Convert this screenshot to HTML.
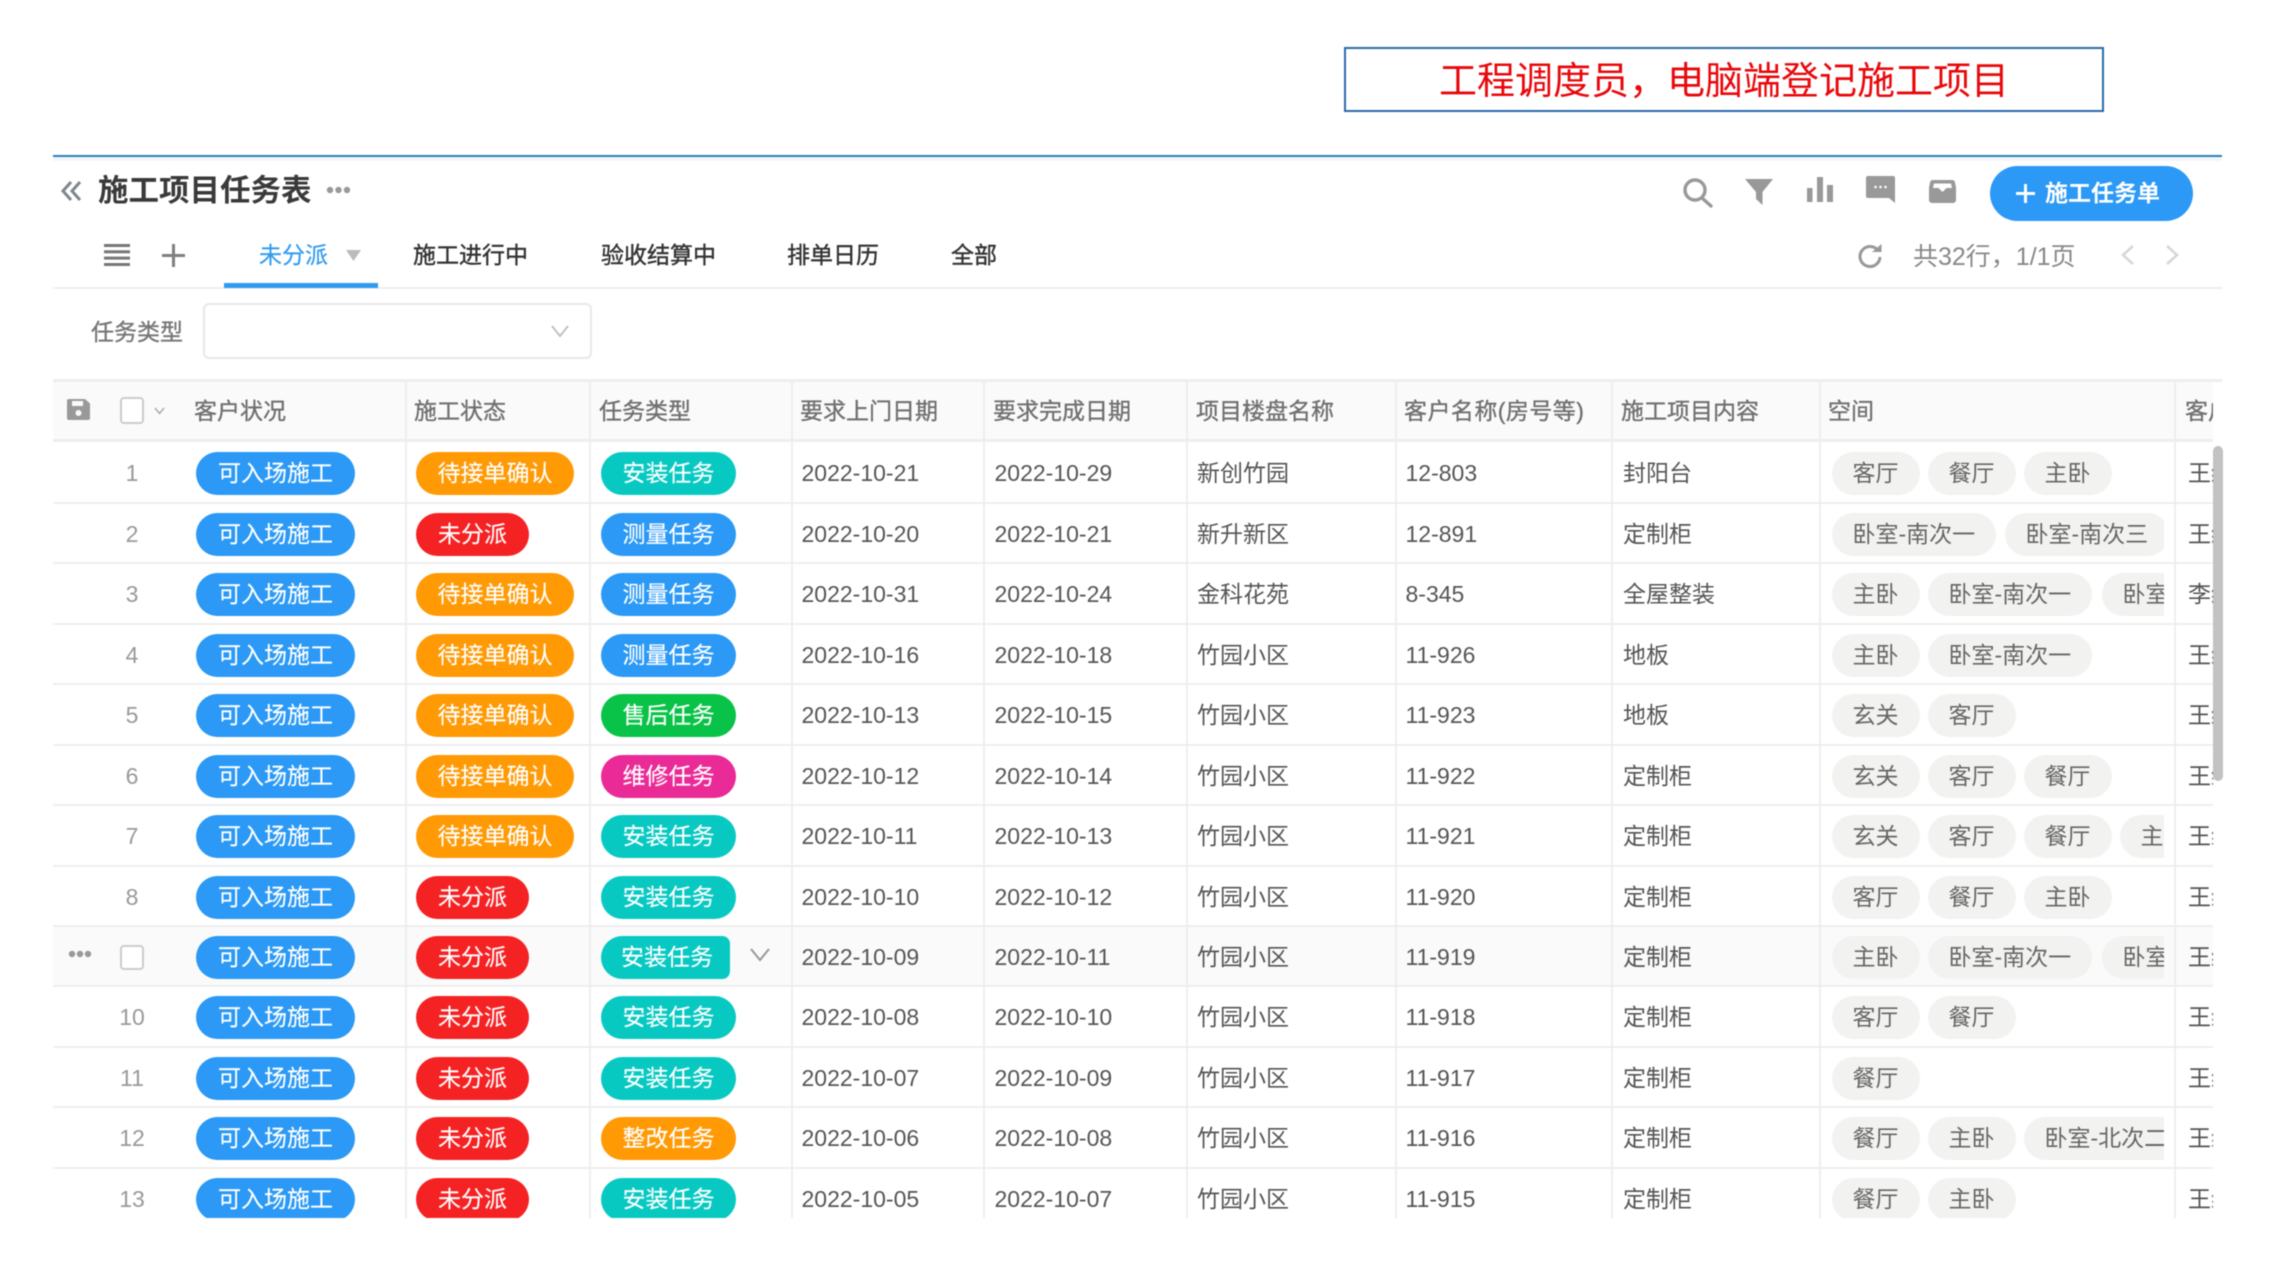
<!DOCTYPE html>
<html lang="zh"><head><meta charset="utf-8"><title>施工项目任务表</title>
<style>
html,body{margin:0;padding:0;background:#fff}
#p{position:relative;width:2276px;height:1280px;overflow:hidden;background:#fff;font-family:"Liberation Sans","Noto Sans CJK SC",sans-serif;font-size:23px;color:#555;filter:blur(.55px)}
#p div,#p span,#p svg{position:absolute;white-space:nowrap}
.x{line-height:60px}
.t{left:53px;top:379px;width:2160px;height:838.500px;overflow:hidden}
.v{top:0;bottom:0;width:2px;background:#eee}
.r{left:0;width:2160px;height:60.450px;box-sizing:border-box;border-bottom:2px solid #eee;margin-top:1.400px}
.h{left:0;top:0;width:2160px;height:63px;background:#fafafa;border-top:3px solid #eee;border-bottom:3px solid #eee;box-sizing:border-box}
.ht{top:2px;line-height:60px;color:#707070;-webkit-text-stroke:.35px #707070}
#p .r>span{top:0;line-height:60px}
#p .r>span.n{left:56px;width:46px;text-align:center;color:#999}
#p .r>span.p{top:9px;height:43px;line-height:42px;border-radius:22px;color:#fff;text-align:center;-webkit-text-stroke:.15px #fff}
.a{left:143px;width:159px;background:#2b99f5}
.so{left:363px;width:158px;background:#ff9a05}
.sr{left:363px;width:113px;background:#f52224}
.ty{left:548px;width:135px}
.te{background:#08c9c2}.bl{background:#2b99f5}.gr{background:#08c347}.pk{background:#ea2a96}.or{background:#ff9a05}
#p .r>span.d1{left:748.500px}#p .r>span.d2{left:941.500px}#p .r>span.c1{left:1144px}#p .r>span.c2{left:1352.500px}#p .r>span.c3{left:1570px}#p .r>span.c4{left:2135px}
#p .r>div.ch{left:1778.500px;top:9px;width:332px;height:43px;overflow:hidden}
#p div.ch>i{position:static;float:left;font-style:normal;height:43px;line-height:42px;padding:0 21px;margin-right:8px;border-radius:22px;background:#f2f2f0;color:#666}
.tb{top:225px;line-height:60px;color:#333;-webkit-text-stroke:.4px #333}
</style></head><body><div id="p">

<div style="left:1344px;top:47px;width:760px;height:65px;border:2px solid #2a6cad;box-sizing:border-box"></div>
<div style="left:1344px;top:50px;width:760px;height:65px;line-height:65px;text-align:center;font-size:38px;color:#e8080c">工程调度员，电脑端登记施工项目</div>

<div style="left:53px;top:154.500px;width:2169px;height:2px;background:#2a80b9"></div>
<div style="left:53px;top:156.500px;width:2169px;height:4px;background:#f3f6f9"></div>

<svg style="left:60px;top:179px" width="24" height="24" viewBox="0 0 24 24" fill="none" stroke="#80858c" stroke-width="3"><path d="M11 3 3 12l8 9M20 3l-8 9 8 9"/></svg>
<div style="left:98px;top:163px;line-height:56px;font-size:30.500px;font-weight:bold;color:#3a3a3a">施工项目任务表</div>
<svg style="left:326px;top:186px" width="26" height="8" viewBox="0 0 26 8" fill="#999"><circle cx="4" cy="4" r="3.200"/><circle cx="12.500" cy="4" r="3.200"/><circle cx="21" cy="4" r="3.200"/></svg>

<svg style="left:1682px;top:177px" width="32" height="31" viewBox="0 0 32 31" fill="none" stroke="#999" stroke-width="3.400"><circle cx="13" cy="13" r="10"/><path d="M20 21l9 8" stroke-linecap="round"/></svg>
<svg style="left:1745px;top:179px" width="28" height="26" viewBox="0 0 28 26" fill="#999"><path d="M0 0h28L17.500 13 V26 L11 20V13z"/></svg>
<svg style="left:1807px;top:177px" width="26" height="25" viewBox="0 0 26 25" fill="#999"><rect x="0" y="11" width="5.500" height="14"/><rect x="10" y="0" width="6" height="25"/><rect x="20" y="8" width="6" height="17"/></svg>
<svg style="left:1866px;top:176px" width="29" height="27" viewBox="0 0 29 27"><path fill="#999" d="M2 0h25a2 2 0 0 1 2 2v25l-6-5H2a2 2 0 0 1-2-2V2a2 2 0 0 1 2-2z"/><g fill="#fff"><circle cx="9.500" cy="11" r="1.300"/><circle cx="14.500" cy="11" r="1.300"/><circle cx="19.500" cy="11" r="1.300"/></g></svg>
<svg style="left:1929px;top:180px" width="27" height="23" viewBox="0 0 27 23"><path fill="#999" d="M4 0h19a3 3 0 0 1 3 2.500l1 5V20a3 3 0 0 1-3 3H3a3 3 0 0 1-3-3V7.500l1-5A3 3 0 0 1 4 0z"/><path fill="#fff" d="M4 8l1-4.500h17L23 8h-5.500l-4 4-4-4z"/></svg>

<div style="left:1990px;top:166px;width:203px;height:55px;border-radius:28px;background:#2b99f5"></div>
<svg style="left:2015px;top:183px" width="21" height="21" viewBox="0 0 21 21" stroke="#fff" stroke-width="3"><path d="M10.500 1v19M1 10.500h19"/></svg>
<div style="left:2045px;top:166px;line-height:54px;color:#fff;font-weight:bold">施工任务单</div>

<svg style="left:104px;top:244px" width="26" height="22" viewBox="0 0 26 22" fill="#777"><rect y="0" width="26" height="3"/><rect y="6.300" width="26" height="3"/><rect y="12.600" width="26" height="3"/><rect y="19" width="26" height="3"/></svg>
<svg style="left:162px;top:244px" width="23" height="23" viewBox="0 0 23 23" stroke="#808080" stroke-width="3"><path d="M11.500 0v23M0 11.500h23"/></svg>

<div class="tb" style="left:259px;color:#2e9bf0;-webkit-text-stroke:.2px #2e9bf0">未分派</div>
<svg style="left:346px;top:250px" width="15" height="11" viewBox="0 0 15 11" fill="#bbb"><path d="M0 0h15L7.500 11z"/></svg>
<div class="tb" style="left:413px">施工进行中</div>
<div class="tb" style="left:601px">验收结算中</div>
<div class="tb" style="left:787px">排单日历</div>
<div class="tb" style="left:951px">全部</div>
<div style="left:53px;top:287px;width:2169px;height:2px;background:#eee"></div>
<div style="left:224px;top:283px;width:154px;height:5px;background:#2e9bf0"></div>

<svg style="left:1857px;top:244px" width="26" height="25" viewBox="0 0 26 25" fill="none" stroke="#999" stroke-width="3"><path d="M21 6.500A10 10 0 1 0 23 13"/><path fill="#999" stroke="none" d="M15 8h9.500V0z"/></svg>
<div style="left:1913px;top:227px;line-height:60px;color:#888;font-size:25px">共32行，1/1页</div>
<svg style="left:2121px;top:245px" width="14" height="20" viewBox="0 0 14 20" fill="none" stroke="#d8d8d8" stroke-width="2.600"><path d="M12 1 2 10l10 9"/></svg>
<svg style="left:2165px;top:245px" width="14" height="20" viewBox="0 0 14 20" fill="none" stroke="#d8d8d8" stroke-width="2.600"><path d="M2 1l10 9-10 9"/></svg>

<div style="left:91px;top:302px;line-height:60px;color:#777;-webkit-text-stroke:.35px #777">任务类型</div>
<div style="left:203px;top:303px;width:389px;height:56px;box-sizing:border-box;border:2px solid #e8e8e8;border-radius:6px"></div>
<svg style="left:551px;top:325px" width="18" height="13" viewBox="0 0 18 13" fill="none" stroke="#bbb" stroke-width="1.800"><path d="M1 1l8 10 8-10"/></svg>

<div style="left:2213px;top:379px;width:9px;height:3px;background:#eee"></div>
<div class="t">
<div class="h"></div>
<svg style="left:14px;top:20px" width="23" height="21" viewBox="0 0 23 21"><path fill="#999" d="M2 0h16l5 4.500V19a2 2 0 0 1-2 2H2a2 2 0 0 1-2-2V2a2 2 0 0 1 2-2z"/><rect x="5" y="2" width="11" height="5" fill="#fafafa"/><circle cx="11.500" cy="14" r="3" fill="#fafafa"/></svg>
<div style="left:67px;top:18px;width:24px;height:27px;box-sizing:border-box;border:2px solid #ccc;border-radius:4px;background:#fff"></div>
<svg style="left:101px;top:28px" width="11" height="8" viewBox="0 0 11 8" fill="none" stroke="#aaa" stroke-width="1.500"><path d="M1 1l4.500 5.500L10 1"/></svg>
<span class="ht" style="left:141px">客户状况</span>
<span class="ht" style="left:361px">施工状态</span>
<span class="ht" style="left:546px">任务类型</span>
<span class="ht" style="left:747px">要求上门日期</span>
<span class="ht" style="left:940px">要求完成日期</span>
<span class="ht" style="left:1143px">项目楼盘名称</span>
<span class="ht" style="left:1351px;letter-spacing:.45px">客户名称(房号等)</span>
<span class="ht" style="left:1568px">施工项目内容</span>
<span class="ht" style="left:1775px">空间</span>
<span class="ht" style="left:2132px">客户</span>

<div class="r" style="top:63px"><span class="n">1</span><span class="p a">可入场施工</span><span class="p so">待接单确认</span><span class="p ty te">安装任务</span><span class="d1">2022-10-21</span><span class="d2">2022-10-29</span><span class="c1">新创竹园</span><span class="c2">12-803</span><span class="c3">封阳台</span><div class="ch"><i>客厅</i><i>餐厅</i><i>主卧</i></div><span class="c4">王经</span></div>
<div class="r" style="top:123.450px"><span class="n">2</span><span class="p a">可入场施工</span><span class="p sr">未分派</span><span class="p ty bl">测量任务</span><span class="d1">2022-10-20</span><span class="d2">2022-10-21</span><span class="c1">新升新区</span><span class="c2">12-891</span><span class="c3">定制柜</span><div class="ch" style="width:332px"><i>卧室-南次一</i><i style="margin:0;position:absolute;left:173px">卧室-南次三</i></div><span class="c4">王经</span></div>
<div class="r" style="top:183.900px"><span class="n">3</span><span class="p a">可入场施工</span><span class="p so">待接单确认</span><span class="p ty bl">测量任务</span><span class="d1">2022-10-31</span><span class="d2">2022-10-24</span><span class="c1">金科花苑</span><span class="c2">8-345</span><span class="c3">全屋整装</span><div class="ch"><i>主卧</i><i>卧室-南次一</i><i style="margin:0;position:absolute;left:270px">卧室</i></div><span class="c4">李经</span></div>
<div class="r" style="top:244.350px"><span class="n">4</span><span class="p a">可入场施工</span><span class="p so">待接单确认</span><span class="p ty bl">测量任务</span><span class="d1">2022-10-16</span><span class="d2">2022-10-18</span><span class="c1">竹园小区</span><span class="c2">11-926</span><span class="c3">地板</span><div class="ch"><i>主卧</i><i>卧室-南次一</i></div><span class="c4">王经</span></div>
<div class="r" style="top:304.800px"><span class="n">5</span><span class="p a">可入场施工</span><span class="p so">待接单确认</span><span class="p ty gr">售后任务</span><span class="d1">2022-10-13</span><span class="d2">2022-10-15</span><span class="c1">竹园小区</span><span class="c2">11-923</span><span class="c3">地板</span><div class="ch"><i>玄关</i><i>客厅</i></div><span class="c4">王经</span></div>
<div class="r" style="top:365.250px"><span class="n">6</span><span class="p a">可入场施工</span><span class="p so">待接单确认</span><span class="p ty pk">维修任务</span><span class="d1">2022-10-12</span><span class="d2">2022-10-14</span><span class="c1">竹园小区</span><span class="c2">11-922</span><span class="c3">定制柜</span><div class="ch"><i>玄关</i><i>客厅</i><i>餐厅</i></div><span class="c4">王经</span></div>
<div class="r" style="top:425.700px"><span class="n">7</span><span class="p a">可入场施工</span><span class="p so">待接单确认</span><span class="p ty te">安装任务</span><span class="d1">2022-10-11</span><span class="d2">2022-10-13</span><span class="c1">竹园小区</span><span class="c2">11-921</span><span class="c3">定制柜</span><div class="ch"><i>玄关</i><i>客厅</i><i>餐厅</i><i style="margin:0;position:absolute;left:288px">主卧</i></div><span class="c4">王经</span></div>
<div class="r" style="top:486.150px"><span class="n">8</span><span class="p a">可入场施工</span><span class="p sr">未分派</span><span class="p ty te">安装任务</span><span class="d1">2022-10-10</span><span class="d2">2022-10-12</span><span class="c1">竹园小区</span><span class="c2">11-920</span><span class="c3">定制柜</span><div class="ch"><i>客厅</i><i>餐厅</i><i>主卧</i></div><span class="c4">王经</span></div>
<div class="r" style="top:546.600px;background:#fafafa"><svg style="left:15px;top:23px" width="24" height="8" viewBox="0 0 24 8" fill="#999"><circle cx="4" cy="4" r="3.200"/><circle cx="12" cy="4" r="3.200"/><circle cx="20" cy="4" r="3.200"/></svg><div style="left:67px;top:18px;width:24px;height:25px;box-sizing:border-box;border:2px solid #ccc;border-radius:4px;background:#fff"></div><span class="p a">可入场施工</span><span class="p sr">未分派</span><span class="p ty te" style="width:129px;border-radius:22px 8px 8px 22px;text-indent:6px;text-align:left;padding-left:14px;box-sizing:border-box">安装任务</span><svg style="left:697px;top:21px" width="20" height="14" viewBox="0 0 20 14" fill="none" stroke="#999" stroke-width="2"><path d="M1 1l9 11 9-11"/></svg><span class="d1">2022-10-09</span><span class="d2">2022-10-11</span><span class="c1">竹园小区</span><span class="c2">11-919</span><span class="c3">定制柜</span><div class="ch"><i>主卧</i><i>卧室-南次一</i><i style="margin:0;position:absolute;left:270px">卧室</i></div><span class="c4">王经</span></div>
<div class="r" style="top:607.050px"><span class="n">10</span><span class="p a">可入场施工</span><span class="p sr">未分派</span><span class="p ty te">安装任务</span><span class="d1">2022-10-08</span><span class="d2">2022-10-10</span><span class="c1">竹园小区</span><span class="c2">11-918</span><span class="c3">定制柜</span><div class="ch"><i>客厅</i><i>餐厅</i></div><span class="c4">王经</span></div>
<div class="r" style="top:667.500px"><span class="n">11</span><span class="p a">可入场施工</span><span class="p sr">未分派</span><span class="p ty te">安装任务</span><span class="d1">2022-10-07</span><span class="d2">2022-10-09</span><span class="c1">竹园小区</span><span class="c2">11-917</span><span class="c3">定制柜</span><div class="ch"><i>餐厅</i></div><span class="c4">王经</span></div>
<div class="r" style="top:727.950px"><span class="n">12</span><span class="p a">可入场施工</span><span class="p sr">未分派</span><span class="p ty or">整改任务</span><span class="d1">2022-10-06</span><span class="d2">2022-10-08</span><span class="c1">竹园小区</span><span class="c2">11-916</span><span class="c3">定制柜</span><div class="ch"><i>餐厅</i><i>主卧</i><i style="margin:0;position:absolute;left:192px">卧室-北次二</i></div><span class="c4">王经</span></div>
<div class="r" style="top:788.400px"><span class="n">13</span><span class="p a">可入场施工</span><span class="p sr">未分派</span><span class="p ty te">安装任务</span><span class="d1">2022-10-05</span><span class="d2">2022-10-07</span><span class="c1">竹园小区</span><span class="c2">11-915</span><span class="c3">定制柜</span><div class="ch"><i>餐厅</i><i>主卧</i></div><span class="c4">王经</span></div>

<div class="v" style="left:352px"></div><div class="v" style="left:536px"></div><div class="v" style="left:738px"></div><div class="v" style="left:930px"></div><div class="v" style="left:1133px"></div><div class="v" style="left:1342px"></div><div class="v" style="left:1558px"></div><div class="v" style="left:1766px"></div><div class="v" style="left:2121px"></div>
</div>
<div style="left:2213px;top:446px;width:10px;height:335px;border-radius:5px;background:#c2c2c2"></div>
</div></body></html>
